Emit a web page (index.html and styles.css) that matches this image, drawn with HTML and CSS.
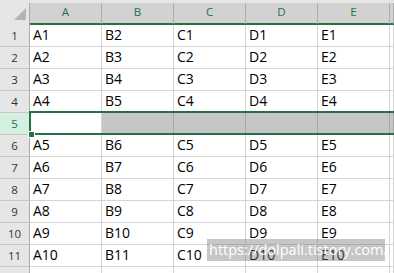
FILE: index.html
```html
<!DOCTYPE html>
<html>
<head>
<meta charset="utf-8">
<link rel="stylesheet" href="styles.css">
</head>
<body>
<div class="sheet">
  <div class="row head">
    <div class="corner"><svg class="tri" width="29" height="22" viewBox="0 0 29 22"><polygon points="26,5 26,17 14,17" fill="#b4b4b4"/></svg></div>
    <div class="ch">A</div><div class="ch">B</div><div class="ch">C</div><div class="ch">D</div><div class="ch">E</div><div class="ch"></div>
  </div>
  <div class="row"><div class="rh">1</div><div class="c">A1</div><div class="c">B2</div><div class="c">C1</div><div class="c">D1</div><div class="c">E1</div><div class="c"></div></div>
  <div class="row"><div class="rh">2</div><div class="c">A2</div><div class="c">B3</div><div class="c">C2</div><div class="c">D2</div><div class="c">E2</div><div class="c"></div></div>
  <div class="row"><div class="rh">3</div><div class="c">A3</div><div class="c">B4</div><div class="c">C3</div><div class="c">D3</div><div class="c">E3</div><div class="c"></div></div>
  <div class="row"><div class="rh">4</div><div class="c">A4</div><div class="c">B5</div><div class="c">C4</div><div class="c">D4</div><div class="c">E4</div><div class="c"></div></div>
  <div class="row sel">
    <div class="rh selh">5</div><div class="c"></div><div class="c hl"></div><div class="c hl"></div><div class="c hl"></div><div class="c hl"></div><div class="c hl"></div>
    <div class="sel-box"></div><div class="handle"></div>
  </div>
  <div class="row"><div class="rh">6</div><div class="c">A5</div><div class="c">B6</div><div class="c">C5</div><div class="c">D5</div><div class="c">E5</div><div class="c"></div></div>
  <div class="row"><div class="rh">7</div><div class="c">A6</div><div class="c">B7</div><div class="c">C6</div><div class="c">D6</div><div class="c">E6</div><div class="c"></div></div>
  <div class="row"><div class="rh">8</div><div class="c">A7</div><div class="c">B8</div><div class="c">C7</div><div class="c">D7</div><div class="c">E7</div><div class="c"></div></div>
  <div class="row"><div class="rh">9</div><div class="c">A8</div><div class="c">B9</div><div class="c">C8</div><div class="c">D8</div><div class="c">E8</div><div class="c"></div></div>
  <div class="row"><div class="rh">10</div><div class="c">A9</div><div class="c">B10</div><div class="c">C9</div><div class="c">D9</div><div class="c">E9</div><div class="c"></div></div>
  <div class="row"><div class="rh">11</div><div class="c">A10</div><div class="c">B11</div><div class="c">C10</div><div class="c">D10</div><div class="c">E10</div><div class="c"></div></div>
  <div class="row"><div class="rh"></div><div class="c"></div><div class="c"></div><div class="c"></div><div class="c"></div><div class="c"></div><div class="c"></div></div>
  <div class="wm">https://dolpali.tistory.com/</div>
</div>
</body>
</html>
```
FILE: styles.css
```css
* { box-sizing: border-box; }
html, body { margin: 0; padding: 0; background: #fff; }
body { font-family: "Open Sans", "Noto Sans", "Liberation Sans", sans-serif; }
.sheet { position: relative; width: 394px; height: 273px; overflow: hidden; }
.row { display: grid; grid-template-columns: 30px repeat(5, 72px) 1fr; height: 22px; }
.row.head { height: 25px; padding-top: 3px; background: #e6e6e6; }
.corner { background: #e6e6e6; border-right: 1px solid #ababab; }
.tri { display: block; }
.ch {
  background: #d2d2d2;
  border-right: 1px solid #ababab;
  border-bottom: 2px solid #217346;
  color: #217346;
  font-size: 11.5px;
  line-height: 17px;
  text-align: center;
}
.rh {
  background: #e6e6e6;
  border-right: 1px solid #ababab;
  border-bottom: 1px solid #c8c8c8;
  color: #333;
  font-size: 11.5px;
  line-height: 21px;
  text-align: center;
}
.rh.selh { background: #d3f0e0; color: #217346; }
.c {
  border-right: 1px solid #d4d4d4;
  border-bottom: 1px solid #d4d4d4;
  color: #000;
  font-size: 14px;
  line-height: 20px;
  padding-left: 3px;
  white-space: nowrap;
}
.c.hl { background: #c6c6c6; border-right-color: #a6a6a6; }
.row.sel { position: relative; }
.sel-box {
  position: absolute;
  left: 29px; top: -2px; right: -6px; bottom: 0;
  border: 2px solid #217346;
}
.handle {
  position: absolute;
  left: 28px; top: 18px;
  width: 7px; height: 7px;
  background: #217346;
  border: 1px solid #fff;
}
.wm {
  position: absolute;
  left: 207px; top: 239px;
  width: 178px; height: 22px;
  background: rgba(120, 120, 120, 0.42);
  color: #fff;
  font-size: 14.5px;
  line-height: 22px;
  padding-left: 2px;
  white-space: nowrap;
}
```
